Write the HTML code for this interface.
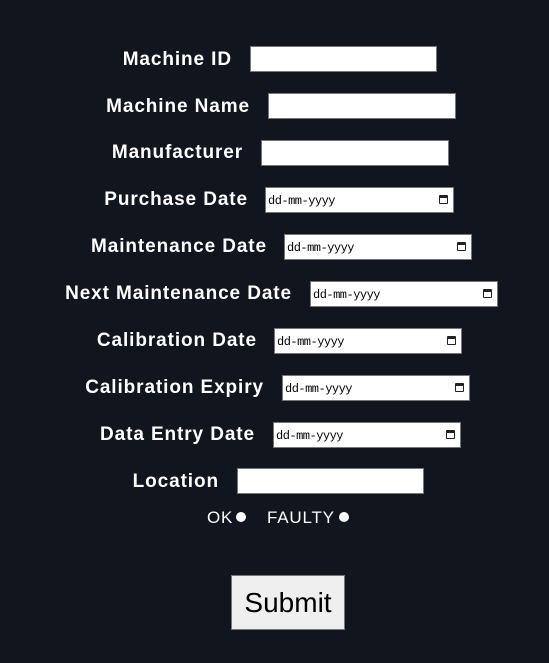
<!DOCTYPE html>
<html><head><style>
body{margin:0;width:549px;height:663px;background:#11151d;position:relative;overflow:hidden;font-family:"Liberation Sans",sans-serif}
.l{position:absolute;color:#fff;font-weight:bold;font-size:19px;letter-spacing:0.9px;text-align:right;white-space:nowrap;line-height:28px}
.i{position:absolute;height:24px;background:#fff;border:1px solid #767676;box-sizing:content-box}
.d{font-family:"Liberation Mono",monospace;font-size:12px;color:#000;line-height:26px;padding-left:2px;letter-spacing:-0.5px}
.c{position:absolute;right:5px;top:7px;width:9px;height:9px;border:1.5px solid #222;border-top-width:3px;border-radius:1px;box-sizing:border-box}
.t{position:absolute;color:#fff;font-size:17px;letter-spacing:0.8px;top:508px}
.dot{position:absolute;width:10px;height:10px;border-radius:50%;background:#fff;top:512px}
</style></head><body>
<div class="l" style="right:317px;top:46px">Machine ID</div><div class="i" style="left:250px;top:46px;width:185px"></div>
<div class="l" style="right:299px;top:93px">Machine Name</div><div class="i" style="left:268px;top:93px;width:186px"></div>
<div class="l" style="right:306px;top:139px">Manufacturer</div><div class="i" style="left:261px;top:140px;width:186px"></div>
<div class="l" style="right:301px;top:186px">Purchase Date</div><div class="i d" style="left:265px;top:187px;width:185px">dd-mm-yyyy<span class="c"></span></div>
<div class="l" style="right:282px;top:233px">Maintenance Date</div><div class="i d" style="left:284px;top:234px;width:184px">dd-mm-yyyy<span class="c"></span></div>
<div class="l" style="right:257px;top:280px">Next Maintenance Date</div><div class="i d" style="left:310px;top:281px;width:184px">dd-mm-yyyy<span class="c"></span></div>
<div class="l" style="right:292px;top:327px">Calibration Date</div><div class="i d" style="left:274px;top:328px;width:184px">dd-mm-yyyy<span class="c"></span></div>
<div class="l" style="right:285px;top:374px">Calibration Expiry</div><div class="i d" style="left:282px;top:375px;width:184px">dd-mm-yyyy<span class="c"></span></div>
<div class="l" style="right:294px;top:421px">Data Entry Date</div><div class="i d" style="left:273px;top:422px;width:184px">dd-mm-yyyy<span class="c"></span></div>
<div class="l" style="right:330px;top:468px">Location</div><div class="i" style="left:237px;top:468px;width:185px"></div>
<div class="t" style="left:207px">OK</div><div class="dot" style="left:236px"></div>
<div class="t" style="left:267px">FAULTY</div><div class="dot" style="left:339px"></div>
<div style="position:absolute;left:231px;top:575px;width:112px;height:53px;background:#efefef;border:1px solid #767676;font-size:28px;text-align:center;line-height:53px;color:#000">Submit</div>
</body></html>
